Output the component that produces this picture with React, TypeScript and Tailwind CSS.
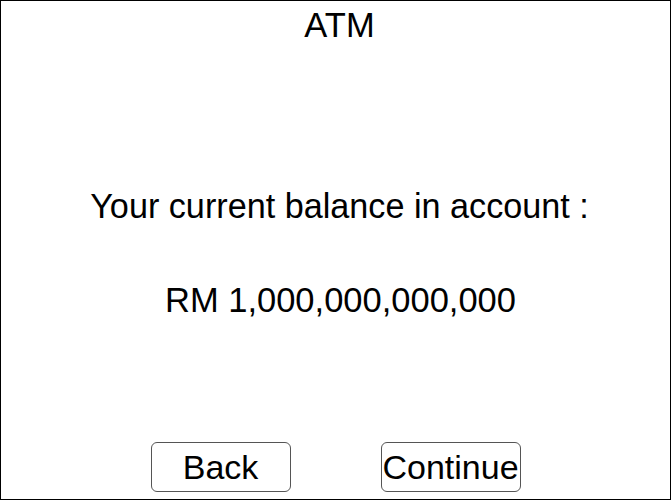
export default function App() {
  return (
    <div className="w-[671px] h-[500px] border border-black bg-white text-black flex flex-col items-center font-['Liberation_Sans',Arial,sans-serif]">
      <h1 className="mt-[7px] pl-[8px] text-[34.5px] leading-none font-normal">ATM</h1>

      <p className="mt-[146px] pl-[8px] text-[34.2px] leading-none">Your current balance in account :</p>

      <p className="mt-[60px] pl-[10px] text-[34.5px] leading-none">RM 1,000,000,000,000</p>

      <div className="mt-auto mb-[7px] flex gap-[90px]">
        <button className="w-[140px] h-[50px] border border-[#555555] rounded-[6px] bg-white text-[34px] leading-none">
          Back
        </button>
        <button className="w-[140px] h-[50px] border border-[#555555] rounded-[6px] bg-white text-[34px] leading-none">
          Continue
        </button>
      </div>
    </div>
  );
}
